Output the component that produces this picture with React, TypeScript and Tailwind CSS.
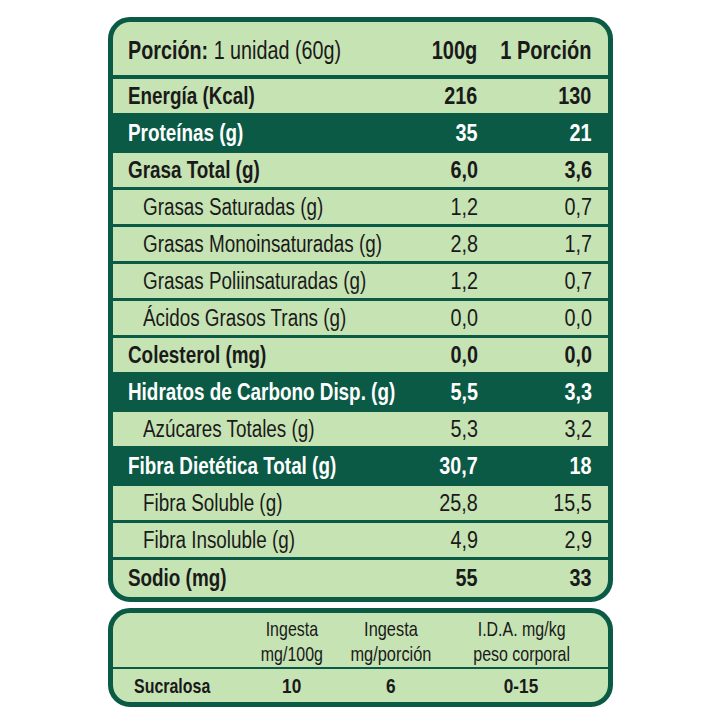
import React from "react";

type Row = { label: string; a: string; b: string; kind: "bold" | "dark" | "sub" };

const rows: Row[] = [
  { label: "Energía (Kcal)", a: "216", b: "130", kind: "bold" },
  { label: "Proteínas (g)", a: "35", b: "21", kind: "dark" },
  { label: "Grasa Total (g)", a: "6,0", b: "3,6", kind: "bold" },
  { label: "Grasas Saturadas (g)", a: "1,2", b: "0,7", kind: "sub" },
  { label: "Grasas Monoinsaturadas (g)", a: "2,8", b: "1,7", kind: "sub" },
  { label: "Grasas Poliinsaturadas (g)", a: "1,2", b: "0,7", kind: "sub" },
  { label: "Ácidos Grasos Trans (g)", a: "0,0", b: "0,0", kind: "sub" },
  { label: "Colesterol (mg)", a: "0,0", b: "0,0", kind: "bold" },
  { label: "Hidratos de Carbono Disp. (g)", a: "5,5", b: "3,3", kind: "dark" },
  { label: "Azúcares Totales (g)", a: "5,3", b: "3,2", kind: "sub" },
  { label: "Fibra Dietética Total (g)", a: "30,7", b: "18", kind: "dark" },
  { label: "Fibra Soluble (g)", a: "25,8", b: "15,5", kind: "sub" },
  { label: "Fibra Insoluble (g)", a: "4,9", b: "2,9", kind: "sub" },
  { label: "Sodio (mg)", a: "55", b: "33", kind: "bold" },
];

const font = { fontFamily: '"Liberation Sans", Arial, sans-serif' };

export default function App() {
  return (
    <div className="w-[720px] h-[720px] bg-white flex flex-col items-center" style={font}>
      <div className="mt-[17px] w-[505px] h-[585px] rounded-[22px] border-[5px] border-[#0b5a45] bg-[#0b5a45] overflow-hidden flex flex-col gap-[3px]">
        <div className="h-[53px] mb-[1px] pt-[3px] shrink-0 bg-[#c6e3b4] flex items-center pl-[15px] pr-[16px] text-[26px] text-[#1a1a1a] whitespace-nowrap">
          <div className="flex-1 min-w-0">
            <span className="inline-block origin-left scale-x-[0.76]">
              <span className="font-bold">Porción:</span> 1 unidad (60g)
            </span>
          </div>
          <div className="w-[100px] shrink-0 flex justify-end font-bold">
            <span className="inline-block shrink-0 origin-right scale-x-[0.77]">100g</span>
          </div>
          <div className="w-[114px] shrink-0 flex justify-end font-bold">
            <span className="inline-block shrink-0 origin-right scale-x-[0.77]">1 Porción</span>
          </div>
        </div>
        {rows.map((r, i) => {
          const last = i === rows.length - 1;
          const dark = r.kind === "dark";
          return (
            <div
              key={r.label}
              className={
                (last ? "flex-1 " : "h-[34px] shrink-0 ") +
                (dark ? "bg-[#0b5a45] text-white " : "bg-[#c6e3b4] text-[#1a1a1a] ") +
                (r.kind === "sub" ? "font-normal pl-[30px] " : "font-bold pl-[15px] ") +
                "flex items-center pr-[16px] text-[23px] whitespace-nowrap"
              }
            >
              <div className="flex-1 min-w-0">
                <span className="inline-block origin-left scale-x-[0.82]">{r.label}</span>
              </div>
              <div className="w-[100px] shrink-0 flex justify-end">
                <span className="inline-block shrink-0 origin-right scale-x-[0.86]">{r.a}</span>
              </div>
              <div className="w-[114px] shrink-0 flex justify-end">
                <span className="inline-block shrink-0 origin-right scale-x-[0.86]">{r.b}</span>
              </div>
            </div>
          );
        })}
      </div>
      <div className="mt-[6px] w-[505px] h-[99px] rounded-[22px] border-[5px] border-[#0b5a45] bg-[#0b5a45] overflow-hidden flex flex-col gap-[2px] text-[#1a1a1a]">
        <div className="h-[54px] pt-[2px] shrink-0 bg-[#c6e3b4] grid grid-cols-[132px_94px_104px_158px] items-center text-[21px] leading-[25px] text-center whitespace-nowrap">
          <div></div>
          <div>
            <span className="inline-block scale-x-[0.76]">Ingesta<br />mg/100g</span>
          </div>
          <div>
            <span className="inline-block scale-x-[0.78]">Ingesta<br />mg/porción</span>
          </div>
          <div>
            <span className="inline-block scale-x-[0.76]">I.D.A. mg/kg<br />peso corporal</span>
          </div>
        </div>
        <div className="flex-1 bg-[#c6e3b4] grid grid-cols-[132px_94px_104px_158px] items-center text-[21px] font-bold text-center whitespace-nowrap">
          <div className="text-left pl-[21px]">
            <span className="inline-block origin-left scale-x-[0.76]">Sucralosa</span>
          </div>
          <div>
            <span className="inline-block scale-x-[0.82]">10</span>
          </div>
          <div>
            <span className="inline-block scale-x-[0.82]">6</span>
          </div>
          <div>
            <span className="inline-block scale-x-[0.82]">0-15</span>
          </div>
        </div>
      </div>
    </div>
  );
}
